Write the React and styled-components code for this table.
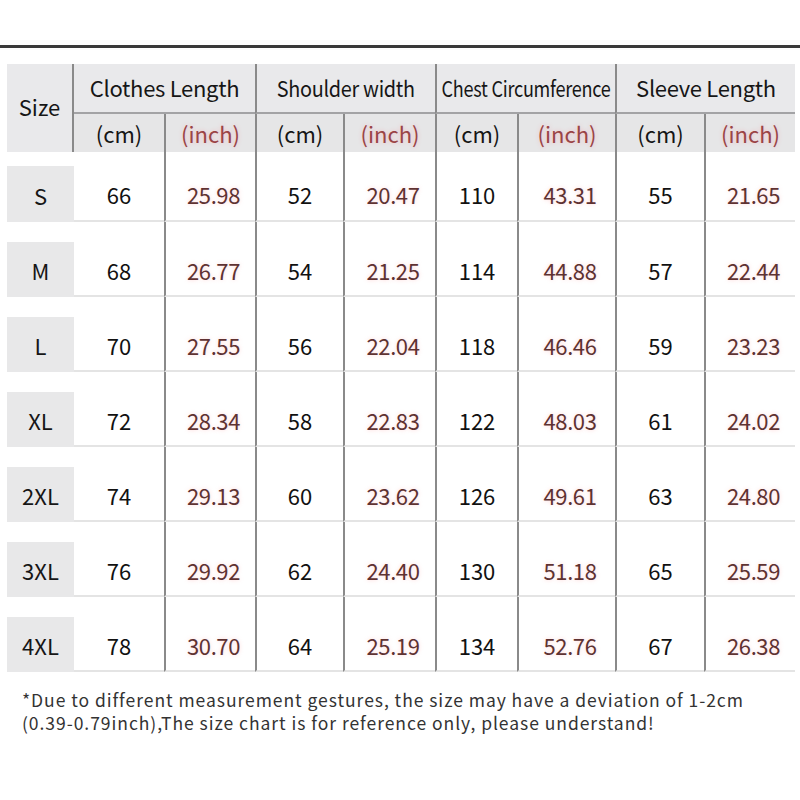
import styled, { createGlobalStyle } from "styled-components";

const sans = `"Noto Sans CJK SC", "Noto Sans", sans-serif`;

const GlobalStyle = createGlobalStyle`
    *{box-sizing:border-box;}
    body{
        margin:0;
        background:#ffffff;
        font-family:${sans};
        color:#161616;
    }
`
const line = "#8a8a8a";
const headBg = "#e9e9eb";

const Page = styled.div`
    padding-top:45px;
    width:800px;
`
const TopRule = styled.div`
    height:3px;
    background:#3a3a3a;
`
const Chart = styled.div`
    display:grid;
    grid-template-columns:67px 90px 91px 88px 92px 82px 98px 89px 91px;
    grid-template-rows:50px 38px 70px repeat(6,75px);
    margin:16px 0 0 7px;
    width:788px;
`
const SizeHead = styled.div`
    grid-row:1/span 2;
    background:${headBg};
    border-right:2px solid ${line};
    display:flex;
    align-items:center;
    justify-content:center;
    padding-bottom:4px;
    font-size:22px;
`
const GroupHead = styled.div`
    grid-column:span 2;
    background:${headBg};
    border-left:${p => p.$first ? "none" : `2px solid ${line}`};
    border-bottom:2px solid #a3a3a5;
    display:flex;
    align-items:center;
    justify-content:center;
    font-size:22px;
    letter-spacing:-0.3px;
    white-space:nowrap;
    padding-bottom:2px;
`
const HeadLabel = styled.span`
    display:inline-block;
    flex-shrink:0;
    transform:scaleX(${p => p.$squeeze || 1});
`
const SubHead = styled.div`
    background:#e6e6e7;
    border-left:${p => p.$noLine ? "none" : `2px solid ${line}`};
    display:flex;
    align-items:center;
    justify-content:center;
    font-size:22px;
    color:${p => p.$inch ? "#9a4446" : "#161616"};
    text-shadow:${p => p.$inch ? "0 0 4px rgba(255,140,150,0.45)" : "none"};
`
const SizeCell = styled.div`
    display:flex;
    flex-direction:column;
    justify-content:flex-end;
`
const SizeBox = styled.div`
    height:${p => p.$first ? "56px" : "55px"};
    background:#e8e8e9;
    display:flex;
    align-items:center;
    justify-content:center;
    font-size:22px;
    padding-top:1px;
`
const ValueCell = styled.div`
    border-left:${p => p.$noLine ? "none" : `2px solid ${line}`};
    border-bottom:2px solid #e4e4e4;
    display:flex;
    align-items:center;
    justify-content:center;
    padding-top:${p => p.$first ? "16px" : "22px"};
    padding-left:${p => p.$inch ? "6px" : "0"};
    font-size:22px;
    letter-spacing:${p => p.$inch ? "-0.4px" : "0"};
    color:${p => p.$inch ? "#5e3232" : "#111111"};
    text-shadow:${p => p.$inch ? "0 0 4px rgba(255,150,150,0.4)" : "none"};
`
const Note = styled.p`
    margin:16px 0 0 22px;
    font-size:17.5px;
    line-height:23px;
    letter-spacing:0.95px;
    color:#333333;
`

const groups = [
    { name: "Clothes Length" },
    { name: "Shoulder width", squeeze: 0.9 },
    { name: "Chest Circumference", squeeze: 0.82 },
    { name: "Sleeve Length" },
];

const rows = [
    ["S", 66, "25.98", 52, "20.47", 110, "43.31", 55, "21.65"],
    ["M", 68, "26.77", 54, "21.25", 114, "44.88", 57, "22.44"],
    ["L", 70, "27.55", 56, "22.04", 118, "46.46", 59, "23.23"],
    ["XL", 72, "28.34", 58, "22.83", 122, "48.03", 61, "24.02"],
    ["2XL", 74, "29.13", 60, "23.62", 126, "49.61", 63, "24.80"],
    ["3XL", 76, "29.92", 62, "24.40", 130, "51.18", 65, "25.59"],
    ["4XL", 78, "30.70", 64, "25.19", 134, "52.76", 67, "26.38"],
];

export default function App() {
    return (
        <Page>
            <GlobalStyle />
            <TopRule />
            <Chart>
                <SizeHead>Size</SizeHead>
                {groups.map((g, i) => (
                    <GroupHead key={g.name} $first={i === 0}>
                        <HeadLabel $squeeze={g.squeeze}>{g.name}</HeadLabel>
                    </GroupHead>
                ))}
                {groups.map((g, i) => [
                    <SubHead key={g.name + "cm"} $noLine={i === 0}>(cm)</SubHead>,
                    <SubHead key={g.name + "in"} $inch>(inch)</SubHead>,
                ])}
                {rows.map((r, ri) => [
                    <SizeCell key={r[0]}><SizeBox $first={ri === 0}>{r[0]}</SizeBox></SizeCell>,
                    ...r.slice(1).map((v, ci) => (
                        <ValueCell key={r[0] + ci} $noLine={ci === 0} $inch={ci % 2 === 1} $first={ri === 0}>{v}</ValueCell>
                    )),
                ])}
            </Chart>
            <Note>
                *Due to different measurement gestures, the size may have a deviation of 1-2cm<br />
                (0.39-0.79inch),The size chart is for reference only, please understand!
            </Note>
        </Page>
    );
}
